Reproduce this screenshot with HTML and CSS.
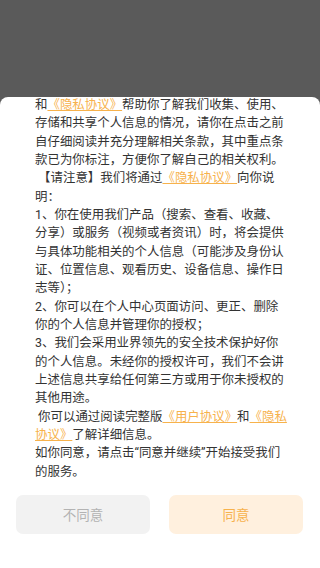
FILE: index.html
```html
<!DOCTYPE html>
<html lang="zh-CN">
<head>
    <meta charset="UTF-8">
    <meta name="viewport" content="width=device-width, initial-scale=1.0">
    <title>隐私协议</title>
    <link rel="stylesheet" href="styles.css">
</head>
<body>
    <div class="mask">
        <div class="sheet">
            <div class="agreement-text">
                <p>和<a href="#" class="link">《隐私协议》</a>帮助你了解我们收集、使用、存储和共享个人信息的情况，请你在点击之前自仔细阅读并充分理解相关条款，其中重点条款已为你标注，方便你了解自己的相关权利。</p>
                <p>&nbsp;【请注意】我们将通过<a href="#" class="link">《隐私协议》</a>向你说明：</p>
                <p>1、你在使用我们产品（搜索、查看、收藏、分享）或服务（视频或者资讯）时，将会提供与具体功能相关的个人信息（可能涉及身份认证、位置信息、观看历史、设备信息、操作日志等）；</p>
                <p>2、你可以在个人中心页面访问、更正、删除你的个人信息并管理你的授权；</p>
                <p>3、我们会采用业界领先的安全技术保护好你的个人信息。未经你的授权许可，我们不会讲上述信息共享给任何第三方或用于你未授权的其他用途。</p>
                <p>&nbsp;你可以通过阅读完整版<a href="#" class="link">《用户协议》</a>和<a href="#" class="link">《隐私协议》</a>了解详细信息。</p>
                <p>如你同意，请点击“同意并继续”开始接受我们的服务。</p>
            </div>

            <div class="action-buttons">
                <button class="btn btn-disagree">不同意</button>
                <button class="btn btn-agree">同意</button>
            </div>
        </div>
    </div>
</body>
</html>
```

FILE: styles.css
```css
* {
    box-sizing: border-box;
    margin: 0;
    padding: 0;
}

html, body {
    height: 100%;
}

body {
    font-family: Roboto, "Noto Sans CJK SC", sans-serif;
    background-color: #5a5a5a;
}

.mask {
    min-height: 100vh;
    display: flex;
    flex-direction: column;
    padding-top: 97px;
}

.sheet {
    flex: 1;
    background: white;
    border-radius: 8px 8px 0 0;
    display: flex;
    flex-direction: column;
}

.agreement-text {
    padding: 0 31px 0 35px;
    font-size: 12.44px;
    line-height: 18.33px;
    color: #333;
    margin-top: -1px;
}

.link {
    color: #f7b24c;
    text-decoration: underline;
}

.action-buttons {
    display: flex;
    gap: 19px;
    padding: 0 17px 0 16px;
    margin-top: 14px;
}

.btn {
    flex: 1;
    height: 39px;
    border: none;
    border-radius: 7px;
    font-family: Roboto, "Noto Sans CJK SC", sans-serif;
    font-size: 13.5px;
    cursor: pointer;
}

.btn-disagree {
    background: #f2f2f2;
    color: #b3b3b3;
}

.btn-agree {
    background: #fff0de;
    color: #f7b24c;
}
```
